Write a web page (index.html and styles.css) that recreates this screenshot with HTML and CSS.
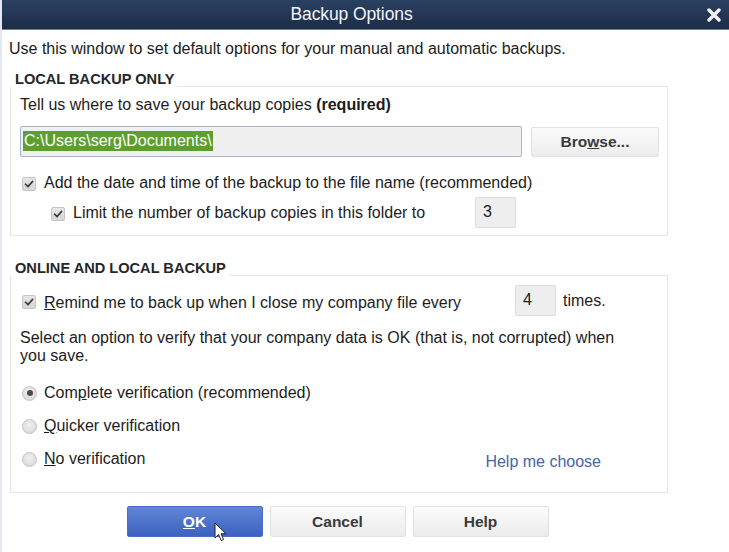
FILE: index.html
```html
<!DOCTYPE html>
<html>
<head>
<meta charset="utf-8">
<link rel="stylesheet" href="styles.css">
</head>
<body>
<div class="window">
  <div class="titlebar">
    <span class="title">Backup Options</span>
    <svg class="close" viewBox="0 0 14 14" width="14" height="14"><path d="M2 2 L12 12 M12 2 L2 12" stroke="#f2f2f2" stroke-width="3.4" stroke-linecap="round"/></svg>
  </div>
  <div class="content">
    <p class="intro">Use this window to set default options for your manual and automatic backups.</p>

    <section class="group">
      <div class="legend"><span class="legend-text">LOCAL BACKUP ONLY</span><span class="rule"></span></div>
      <div class="box box-local">
        <p class="line">Tell us where to save your backup copies <b>(required)</b></p>
        <div class="path-row">
          <div class="path-input"><span class="sel">C:\Users\serg\Documents\</span></div>
          <button class="btn btn-browse">Bro<u>w</u>se...</button>
        </div>
        <div class="check-row">
          <span class="cb"><svg viewBox="0 0 14 14" width="14" height="14"><path d="M3.5 7.2 L6 9.6 L10.6 4.4" fill="none" stroke="#3c3c3c" stroke-width="1.6" stroke-linecap="round" stroke-linejoin="round"/></svg></span>
          <span class="label">Add the date and time of the backup to the file name (recommended)</span>
        </div>
        <div class="check-row indent">
          <span class="cb"><svg viewBox="0 0 14 14" width="14" height="14"><path d="M3.5 7.2 L6 9.6 L10.6 4.4" fill="none" stroke="#3c3c3c" stroke-width="1.6" stroke-linecap="round" stroke-linejoin="round"/></svg></span>
          <span class="label label-limit">Limit the number of backup copies in this folder to</span>
          <span class="num">3</span>
        </div>
      </div>
    </section>

    <section class="group group-online">
      <div class="legend"><span class="legend-text">ONLINE AND LOCAL BACKUP</span><span class="rule"></span></div>
      <div class="box box-online">
        <div class="check-row remind">
          <span class="cb"><svg viewBox="0 0 14 14" width="14" height="14"><path d="M3.5 7.2 L6 9.6 L10.6 4.4" fill="none" stroke="#3c3c3c" stroke-width="1.6" stroke-linecap="round" stroke-linejoin="round"/></svg></span>
          <span class="label label-remind"><u>R</u>emind me to back up when I close my company file every</span>
          <span class="num num-remind">4</span>
          <span class="times">times.</span>
        </div>
        <p class="para">Select an option to verify that your company data is OK (that is, not corrupted) when you save.</p>
        <div class="radio-row first">
          <span class="rb on"></span>
          <span class="label">Com<u>p</u>lete verification (recommended)</span>
        </div>
        <div class="radio-row">
          <span class="rb"></span>
          <span class="label"><u>Q</u>uicker verification</span>
        </div>
        <div class="radio-row">
          <span class="rb"></span>
          <span class="label"><u>N</u>o verification</span>
          <span class="link">Help me choose</span>
        </div>
      </div>
    </section>

    <div class="buttons">
      <button class="btn btn-ok"><u>O</u>K</button>
      <button class="btn">Cancel</button>
      <button class="btn">Help</button>
      <svg class="cursor" viewBox="0 0 14 22" width="14" height="22"><path d="M1 1 L1 16 L4.6 12.6 L7.2 18.6 L9.6 17.6 L7 11.8 L12 11.8 Z" fill="#fff" stroke="#222" stroke-width="1" stroke-linejoin="round"/></svg>
    </div>
  </div>
</div>
</body>
</html>
```

FILE: styles.css
```css
* { box-sizing: border-box; }
html, body { margin: 0; padding: 0; background: #fff; }
body {
  font-family: "Liberation Sans", Arial, sans-serif;
  font-size: 16px;
  color: #1c1c1c;
  width: 729px;
  height: 552px;
  overflow: hidden;
}
.window {
  width: 729px;
  height: 552px;
  background: #fff;
  border-left: 2px solid #e4e8f0;
}
.titlebar {
  height: 30px;
  background: linear-gradient(#2b4163, #1c2c47);
  border-bottom: 1px solid #6f7f98;
  display: flex;
  align-items: center;
  justify-content: center;
  position: relative;
  padding-right: 28px;
}
.title {
  color: #f2f4f8;
  font-size: 17.5px;
  letter-spacing: -0.1px;
}
.close {
  position: absolute;
  right: 8px;
  top: 8px;
}
.content {
  padding: 10px 0 0 7px;
}
.intro {
  margin: 0;
  line-height: 18px;
}
.group { width: 658px; margin-left: 1px; }
.legend {
  display: flex;
  align-items: flex-end;
  margin-top: 12px;
  height: 17px;
}
.group-online .legend { margin-top: 23px; }
.legend-text {
  font-weight: bold;
  font-size: 14.6px;
  color: #262626;
  padding-left: 5px;
  padding-right: 3px;
  line-height: 16px;
}
.rule {
  flex: 1;
  border-bottom: 1px solid #e6e6e6;
}
.box {
  border: 1px solid #e6e6e6;
  border-top: none;
  padding: 9px 8px 0 9px;
}
.line { margin: 0; line-height: 18px; }
.path-row {
  display: flex;
  gap: 9px;
  margin-top: 12px;
}
.path-input {
  width: 502px;
  height: 31px;
  border: 1px solid #a7b3c6;
  border-radius: 2px;
  background: #f0f0f0;
  padding: 4px 0 0 2px;
}
.sel {
  display: inline-block;
  background: #5c9f2f;
  color: #fff;
  line-height: 20px;
  padding: 0 1px;
}
.btn {
  font-family: "Liberation Sans", Arial, sans-serif;
  font-size: 15.5px;
  font-weight: bold;
  color: #3a3a3a;
  width: 136px;
  height: 31px;
  border: 1px solid #e2e2e2;
  border-radius: 2px;
  background: linear-gradient(#fbfbfb, #ececec);
  padding: 0;
}
.btn-browse { width: 128px; height: 30px; margin-top: 1px; }
.check-row {
  display: flex;
  align-items: center;
  margin-top: 17px;
  line-height: 18px;
}
.check-row.indent { margin-top: 5px; margin-left: 29px; }
.cb {
  width: 14px;
  height: 14px;
  border: 1px solid #c6c6c6;
  border-radius: 2px;
  background: linear-gradient(#e6e6e6, #d6d6d6);
  margin-left: 2px;
  margin-right: 8px;
  display: flex;
  position: relative;
  top: 1px;
}
.cb svg { position: absolute; left: -1px; top: -1px; }
.label-limit { width: 402px; }
.num {
  width: 41px;
  height: 31px;
  background: #eeeeee;
  border: 1px solid #dcdcdc;
  border-radius: 2px;
  padding: 5px 0 0 7px;
  line-height: 18px;
}
.remind { margin-top: 0; }
.label-remind { width: 471px; position: relative; top: 2px; }
.times { margin-left: 7px; }
.para {
  margin: 13px 0 0 0;
  line-height: 18px;
  width: 600px;
}
.radio-row {
  display: flex;
  align-items: center;
  margin-top: 15px;
  line-height: 18px;
}
.radio-row.first { margin-top: 19px; }
.rb {
  width: 15px;
  height: 15px;
  border-radius: 50%;
  border: 1px solid #c4c4c4;
  background: radial-gradient(circle at 50% 40%, #f0f0f0, #d4d4d4);
  margin-left: 2px;
  margin-right: 7px;
  position: relative;
}
.rb.on::after {
  content: "";
  position: absolute;
  left: 3.5px;
  top: 3.5px;
  width: 6px;
  height: 6px;
  border-radius: 50%;
  background: #4a4a4a;
}
.link {
  margin-left: auto;
  margin-right: 58px;
  color: #4466a8;
  position: relative;
  top: 3px;
}
.box-online { padding-top: 9px; padding-bottom: 24px; }
.box-local { padding-bottom: 7px; }
.buttons {
  width: 658px;
  margin-left: 1px;
  display: flex;
  justify-content: center;
  gap: 7px;
  margin-top: 13px;
  position: relative;
  padding-right: 3px;
}
.btn-ok {
  background: linear-gradient(#6186d6, #3c61bf);
  border-color: #4a6cc6;
  color: #fff;
}
.cursor {
  position: absolute;
  left: 204px;
  top: 16px;
}
```
